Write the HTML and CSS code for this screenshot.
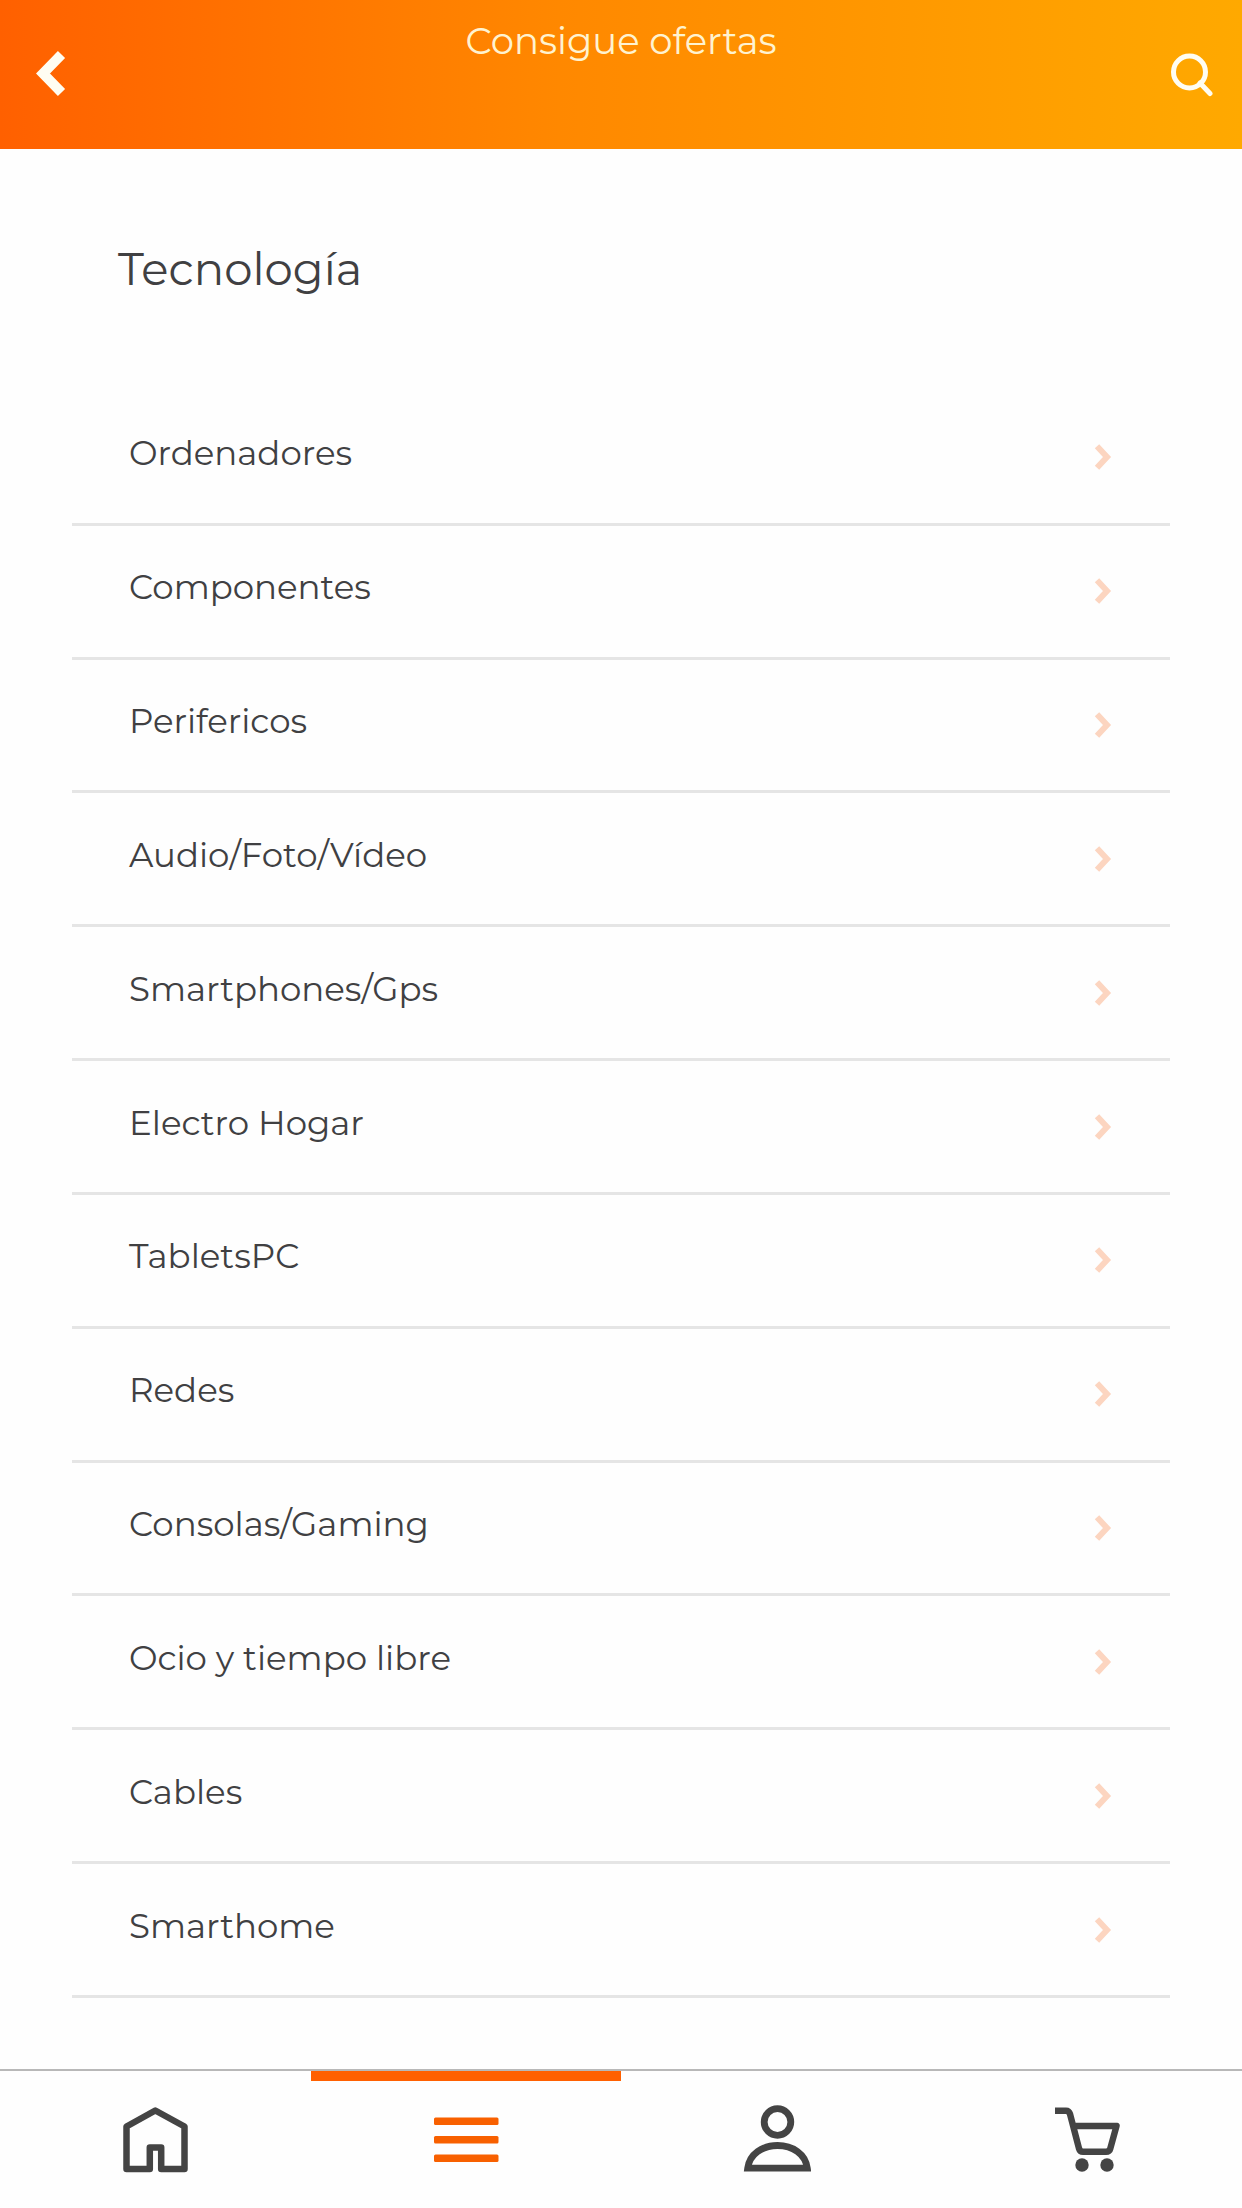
FILE: index.html
```html
<!DOCTYPE html>
<html lang="es">
<head>
<meta charset="utf-8">
<meta name="viewport" content="width=device-width, initial-scale=1">
<title>Tecnología</title>
<link rel="stylesheet" href="styles.css">
</head>
<body>
<svg class="sprite" aria-hidden="true">
  <symbol id="chevron" viewBox="0 0 18 28"><path d="M3 3.300 13 14 3 24.700" fill="none" stroke="currentColor" stroke-width="6"/></symbol>
</svg>
<header class="topbar">
  <button class="icon-button" type="button" aria-label="Volver">
    <svg width="30" height="48" viewBox="0 0 30 48"><path d="M25.500 4.500 7 23.500l18.500 19" fill="none" stroke="currentColor" stroke-width="10"/></svg>
  </button>
  <p class="topbar-title">Consigue ofertas</p>
  <button class="icon-button" type="button" aria-label="Buscar">
    <svg width="44" height="46" viewBox="0 0 44 46" fill="none" stroke="currentColor" stroke-width="5"><circle cx="19.500" cy="21" r="16"/><path d="M30 32l10 10.500" stroke-linecap="round"/></svg>
  </button>
</header>
<main class="content">
  <h1 class="title">Tecnología</h1>
  <ul class="list">
    <li class="item"><a class="link" href="#">Ordenadores<svg class="chevron"><use href="#chevron"/></svg></a></li>
    <li class="item"><a class="link" href="#">Componentes<svg class="chevron"><use href="#chevron"/></svg></a></li>
    <li class="item"><a class="link" href="#">Perifericos<svg class="chevron"><use href="#chevron"/></svg></a></li>
    <li class="item"><a class="link" href="#">Audio/Foto/Vídeo<svg class="chevron"><use href="#chevron"/></svg></a></li>
    <li class="item"><a class="link" href="#">Smartphones/Gps<svg class="chevron"><use href="#chevron"/></svg></a></li>
    <li class="item"><a class="link" href="#">Electro Hogar<svg class="chevron"><use href="#chevron"/></svg></a></li>
    <li class="item"><a class="link" href="#">TabletsPC<svg class="chevron"><use href="#chevron"/></svg></a></li>
    <li class="item"><a class="link" href="#">Redes<svg class="chevron"><use href="#chevron"/></svg></a></li>
    <li class="item"><a class="link" href="#">Consolas/Gaming<svg class="chevron"><use href="#chevron"/></svg></a></li>
    <li class="item"><a class="link" href="#">Ocio y tiempo libre<svg class="chevron"><use href="#chevron"/></svg></a></li>
    <li class="item"><a class="link" href="#">Cables<svg class="chevron"><use href="#chevron"/></svg></a></li>
    <li class="item"><a class="link" href="#">Smarthome<svg class="chevron"><use href="#chevron"/></svg></a></li>
  </ul>
</main>
<nav class="tabs" aria-label="Principal">
  <a class="tab" href="#" aria-label="Inicio">
    <svg class="tab-icon" viewBox="0 0 70 70" fill="none" stroke="currentColor" stroke-width="6.500" stroke-linejoin="round" stroke-linecap="round"><path d="M35.300 5.500 6.500 21.500V64H29.800V42.500H41.200V64H64.500V21.500Z"/></svg>
  </a>
  <a class="tab tab-active" href="#" aria-label="Categorías" aria-current="page">
    <svg class="tab-icon" viewBox="0 0 70 70" fill="currentColor"><rect x="3" y="12.500" width="64.500" height="7.500" rx="1.500"/><rect x="3" y="31" width="64.500" height="7.500" rx="1.500"/><rect x="3" y="49.500" width="64.500" height="7.500" rx="1.500"/></svg>
  </a>
  <a class="tab" href="#" aria-label="Mi cuenta">
    <svg class="tab-icon" viewBox="0 0 70 70" fill="none" stroke="currentColor" stroke-width="6.800"><circle cx="36.500" cy="17" r="13.300"/><path d="M6.700 63.200C8.500 49 21.500 40.500 36.500 40.500S64.500 49 66.300 63.200Z"/></svg>
  </a>
  <a class="tab" href="#" aria-label="Carrito">
    <svg class="tab-icon" viewBox="0 0 70 70" fill="none" stroke="currentColor" stroke-width="6.500" stroke-linejoin="round"><path d="M3 5.700H14Q17 5.700 18 9L27 43.500Q28 46.800 31 46.800H54Q57.500 46.800 58.300 43.500L64.500 21H21"/><g fill="currentColor" stroke="none"><circle cx="30" cy="60" r="6.700"/><circle cx="55" cy="60" r="6.700"/></g></svg>
  </a>
</nav>
</body>
</html>
```
FILE: styles.css
```css
* {
  box-sizing: border-box;
}

body {
  display: flex;
  flex-direction: column;
  min-height: 100vh;
  margin: 0;
  background: #fefefe;
  color: #404042;
  font-family: Montserrat, Inter, sans-serif;
  font-weight: 400;
}

.sprite {
  display: none;
}

.topbar {
  display: grid;
  grid-template-columns: 36px 1fr 44px;
  align-items: center;
  height: 149px;
  padding: 0 28px 2px 36px;
  background: linear-gradient(90deg, #ff6000, #ff8800 45%, #ffa900);
  color: #fff;
}

.topbar-title {
  align-self: flex-start;
  margin: 19px 0 0;
  color: #fff3d0;
  font-size: 37px;
  line-height: 44px;
  text-align: center;
}

.icon-button {
  display: flex;
  padding: 0;
  border: 0;
  background: none;
  color: #fffdf2;
}

.content {
  display: flex;
  flex: 1;
  flex-direction: column;
  padding: 0 72px 71px;
}

.title {
  margin: 90px 46px 93px;
  font-size: 45px;
  font-weight: 400;
  line-height: 60px;
}

.list {
  display: flex;
  flex: 1;
  flex-direction: column;
  margin: 0;
  padding: 0;
  list-style: none;
}

.item {
  display: flex;
  flex: 1;
  border-bottom: 3px solid #e5e5e5;
}

.link {
  display: flex;
  flex: 1;
  justify-content: space-between;
  align-items: center;
  padding: 40px 58px 48px 57px;
  color: inherit;
  font-size: 34px;
  line-height: 42px;
  text-decoration: none;
}

.chevron {
  width: 18px;
  height: 28px;
  margin-top: 8px;
  color: #fcd5c0;
}

.tabs {
  display: grid;
  grid-template-columns: repeat(4, 1fr);
  height: 139px;
  border-top: 2px solid #b8b8b8;
}

.tab {
  display: flex;
  justify-content: center;
  padding-top: 34px;
  color: #444;
}

.tab-active {
  padding-top: 24px;
  border-top: 10px solid #ff6000;
  color: #f86000;
}

.tab-icon {
  width: 70px;
  height: 70px;
}
```
